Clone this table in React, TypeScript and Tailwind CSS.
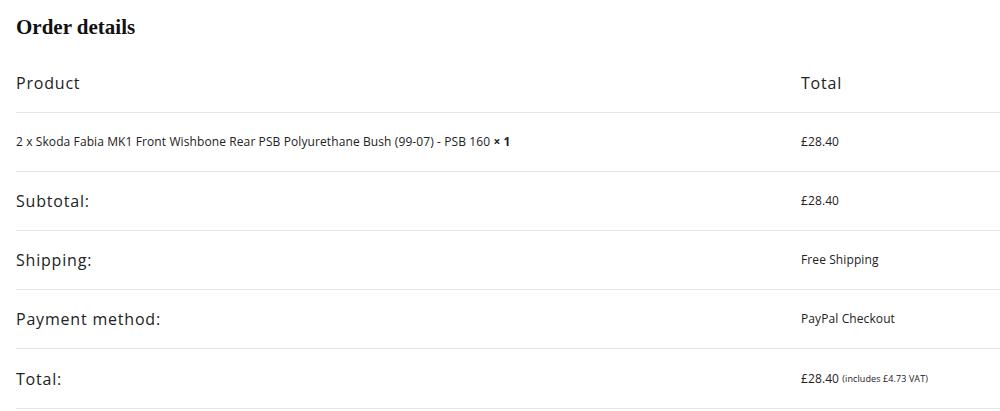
import React from "react";

const rows = [
  { label: "Subtotal:", value: "£28.40" },
  { label: "Shipping:", value: "Free Shipping" },
  { label: "Payment method:", value: "PayPal Checkout" },
];

export default function App() {
  return (
    <div className="bg-white w-[1000px] h-[411px] overflow-hidden pl-4 text-[#222] font-['Open_Sans',sans-serif]">
      <h2 className="pt-[12px] h-[54px] text-[21px] leading-[30px] font-bold font-['Liberation_Serif',serif] text-[#111]">
        Order details
      </h2>
      <div className="grid grid-cols-[769px_1fr]">
        <div className="h-[59px] flex items-center border-b border-[#e6e6e6] text-[16px] tracking-[0.8px]">Product</div>
        <div className="h-[59px] flex items-center border-b border-[#e6e6e6] pl-4 text-[16px] tracking-[0.8px]">Total</div>

        <div className="h-[59px] flex items-center border-b border-[#e6e6e6] text-[12px] tracking-[0.1px]">
          2 x Skoda Fabia MK1 Front Wishbone Rear PSB Polyurethane Bush (99-07) - PSB 160&nbsp;
          <strong className="font-bold">× 1</strong>
        </div>
        <div className="h-[59px] flex items-center border-b border-[#e6e6e6] pl-4 text-[12px] tracking-[0.1px]">£28.40</div>

        {rows.map((r) => (
          <React.Fragment key={r.label}>
            <div className="h-[59px] flex items-center border-b border-[#e6e6e6] text-[16px] tracking-[0.8px]">{r.label}</div>
            <div className="h-[59px] flex items-center border-b border-[#e6e6e6] pl-4 text-[12px] tracking-[0.1px]">{r.value}</div>
          </React.Fragment>
        ))}

        <div className="h-[60px] flex items-center border-b border-[#e6e6e6] text-[16px] tracking-[0.8px]">Total:</div>
        <div className="h-[60px] flex items-center border-b border-[#e6e6e6] pl-4 text-[12px] tracking-[0.1px]">
          £28.40&nbsp;<small className="text-[9px]">(includes £4.73 VAT)</small>
        </div>
      </div>
    </div>
  );
}
